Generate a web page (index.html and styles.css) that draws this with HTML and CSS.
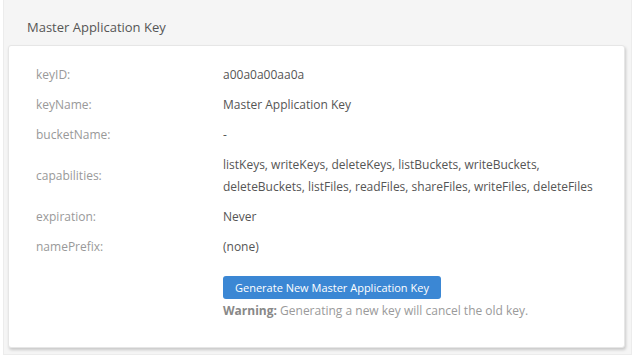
FILE: index.html
```html
<!DOCTYPE html>
<html>
<head>
<meta charset="utf-8">
<link rel="stylesheet" href="styles.css">
</head>
<body>
<div class="panel">
  <div class="panel-title">Master Application Key</div>
  <div class="card">
    <div class="rows">
      <div class="label">keyID:</div>
      <div class="value">a00a0a00aa0a</div>
      <div class="label">keyName:</div>
      <div class="value">Master Application Key</div>
      <div class="label">bucketName:</div>
      <div class="value">-</div>
      <div class="label">capabilities:</div>
      <div class="value">listKeys, writeKeys, deleteKeys, listBuckets, writeBuckets,<br>deleteBuckets, listFiles, readFiles, shareFiles, writeFiles, deleteFiles</div>
      <div class="label">expiration:</div>
      <div class="value">Never</div>
      <div class="label">namePrefix:</div>
      <div class="value">(none)</div>
    </div>
    <div class="actions">
      <button class="btn">Generate New Master Application Key</button>
      <div class="warning"><strong>Warning:</strong> Generating a new key will cancel the old key.</div>
    </div>
  </div>
</div>
</body>
</html>
```

FILE: styles.css
```css
html, body {
  margin: 0;
  padding: 0;
  background: #ffffff;
  font-family: "Open Sans", "Liberation Sans", sans-serif;
}
.panel {
  margin: 0 8px 0 3px;
  background: #f5f5f5;
  border: 1px solid #ececec;
  border-top: none;
  padding-bottom: 6px;
}
.panel-title {
  box-sizing: border-box;
  height: 45px;
  padding: 9px 0 0 23px;
  display: flex;
  align-items: center;
  font-size: 13px;
  color: #555555;
}
.card {
  margin: 0 6px 0 4px;
  background: #ffffff;
  border-radius: 3px;
  border: 1px solid #e6e6e6;
  box-shadow: 1px 2px 3px rgba(0, 0, 0, 0.18);
  padding: 18px 0 27px 27px;
}
.rows {
  display: grid;
  grid-template-columns: 187px 1fr;
  row-gap: 8px;
  align-items: center;
  font-size: 12px;
  line-height: 22px;
}
.label {
  color: #999999;
}
.value {
  color: #555555;
}
.actions {
  margin-left: 187px;
  margin-top: 18px;
}
.btn {
  display: block;
  height: 23px;
  padding: 0 12px;
  border: none;
  border-radius: 3px;
  background: #3b87d4;
  color: #ffffff;
  font-family: "Open Sans", "Liberation Sans", sans-serif;
  font-size: 11px;
}
.warning {
  margin-top: 3px;
  font-size: 12px;
  line-height: 18px;
  color: #9a9a9a;
}
.warning strong {
  color: #888888;
  font-weight: 700;
}
```
